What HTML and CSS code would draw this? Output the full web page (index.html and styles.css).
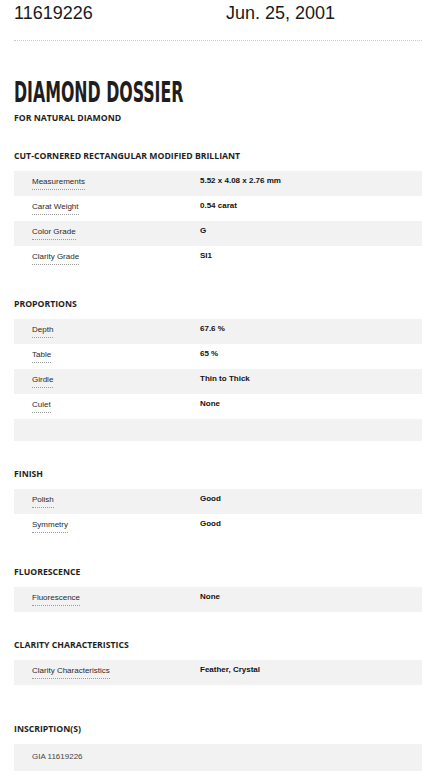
FILE: index.html
```html
<!DOCTYPE html>
<html lang="en">
<head>
<meta charset="utf-8">
<title>Diamond Dossier</title>
<link rel="stylesheet" href="styles.css">
</head>
<body>
<div class="page">
  <header class="report-head">
    <div class="report-num">11619226</div>
    <div class="report-date">Jun. 25, 2001</div>
  </header>

  <h1 class="title">DIAMOND DOSSIER</h1>
  <div class="subtitle">FOR NATURAL DIAMOND</div>

  <section class="section section--first">
    <h2 class="section-title">CUT-CORNERED RECTANGULAR MODIFIED BRILLIANT</h2>
    <div class="rows">
      <div class="row"><span class="label">Measurements</span><span class="value">5.52 x 4.08 x 2.76 mm</span></div>
      <div class="row"><span class="label">Carat Weight</span><span class="value">0.54 carat</span></div>
      <div class="row"><span class="label">Color Grade</span><span class="value">G</span></div>
      <div class="row"><span class="label">Clarity Grade</span><span class="value">SI1</span></div>
    </div>
  </section>

  <section class="section">
    <h2 class="section-title">PROPORTIONS</h2>
    <div class="rows">
      <div class="row"><span class="label">Depth</span><span class="value">67.6 %</span></div>
      <div class="row"><span class="label">Table</span><span class="value">65 %</span></div>
      <div class="row"><span class="label">Girdle</span><span class="value">Thin to Thick</span></div>
      <div class="row"><span class="label">Culet</span><span class="value">None</span></div>
      <div class="row row--empty"></div>
    </div>
  </section>

  <section class="section">
    <h2 class="section-title">FINISH</h2>
    <div class="rows">
      <div class="row"><span class="label">Polish</span><span class="value">Good</span></div>
      <div class="row"><span class="label">Symmetry</span><span class="value">Good</span></div>
    </div>
  </section>

  <section class="section">
    <h2 class="section-title">FLUORESCENCE</h2>
    <div class="rows">
      <div class="row"><span class="label">Fluorescence</span><span class="value">None</span></div>
    </div>
  </section>

  <section class="section">
    <h2 class="section-title">CLARITY CHARACTERISTICS</h2>
    <div class="rows">
      <div class="row"><span class="label">Clarity Characteristics</span><span class="value">Feather, Crystal</span></div>
    </div>
  </section>

  <section class="section section--spaced">
    <h2 class="section-title">INSCRIPTION(S)</h2>
    <div class="rows">
      <div class="row row--text">GIA 11619226</div>
    </div>
  </section>
</div>
</body>
</html>
```

FILE: styles.css
```css
* { box-sizing: border-box; }

html, body {
  margin: 0;
  padding: 0;
  background: #ffffff;
}

body {
  font-family: "Liberation Sans", Arial, sans-serif;
  color: #222222;
  overflow: hidden;
}

.page {
  padding-left: 14px;
}

.report-head {
  display: grid;
  grid-template-columns: 212px 1fr;
  padding-top: 3px;
  padding-bottom: 17px;
  border-bottom: 1px dotted #c8c8c8;
  font-size: 18px;
  line-height: 20px;
  color: #1a1a1a;
}

.title {
  margin: 36px 0 0 0;
  font-family: "DejaVu Sans Condensed", "DejaVu Sans", sans-serif;
  font-weight: 700;
  font-size: 29px;
  line-height: 30px;
  color: #1e1e1e;
  transform: scaleX(0.605);
  transform-origin: left center;
  white-space: nowrap;
}

.subtitle {
  margin-top: 5px;
  font-family: "Open Sans", sans-serif;
  font-weight: 700;
  font-size: 8.7px;
  line-height: 12px;
  color: #1e1e1e;
}

.section {
  margin-top: 27px;
}

.section--first {
  margin-top: 26px;
}

.section--spaced {
  margin-top: 38px;
}

.section-title {
  margin: 0 0 9px 0;
  font-family: "Open Sans", sans-serif;
  font-weight: 700;
  font-size: 8.7px;
  line-height: 12px;
  color: #1e1e1e;
}

.rows {
  display: flex;
  flex-direction: column;
}

.row {
  display: flex;
  align-items: flex-start;
  height: 25px;
  padding-left: 18px;
  font-size: 8px;
  line-height: 12px;
}

.row:nth-child(odd) {
  background: #f2f2f2;
}

.row--empty {
  height: 22px;
}

.label {
  display: inline-block;
  flex: none;
  margin-top: 5px;
  padding-bottom: 1px;
  border-bottom: 1px dotted #9a9a9a;
  color: #2a2a2a;
}

.value {
  margin-top: 4px;
  margin-left: auto;
  width: 222px;
  font-weight: 700;
  color: #111111;
}

.row--text {
  height: 27px;
  padding-top: 7px;
  color: #444444;
}
```
